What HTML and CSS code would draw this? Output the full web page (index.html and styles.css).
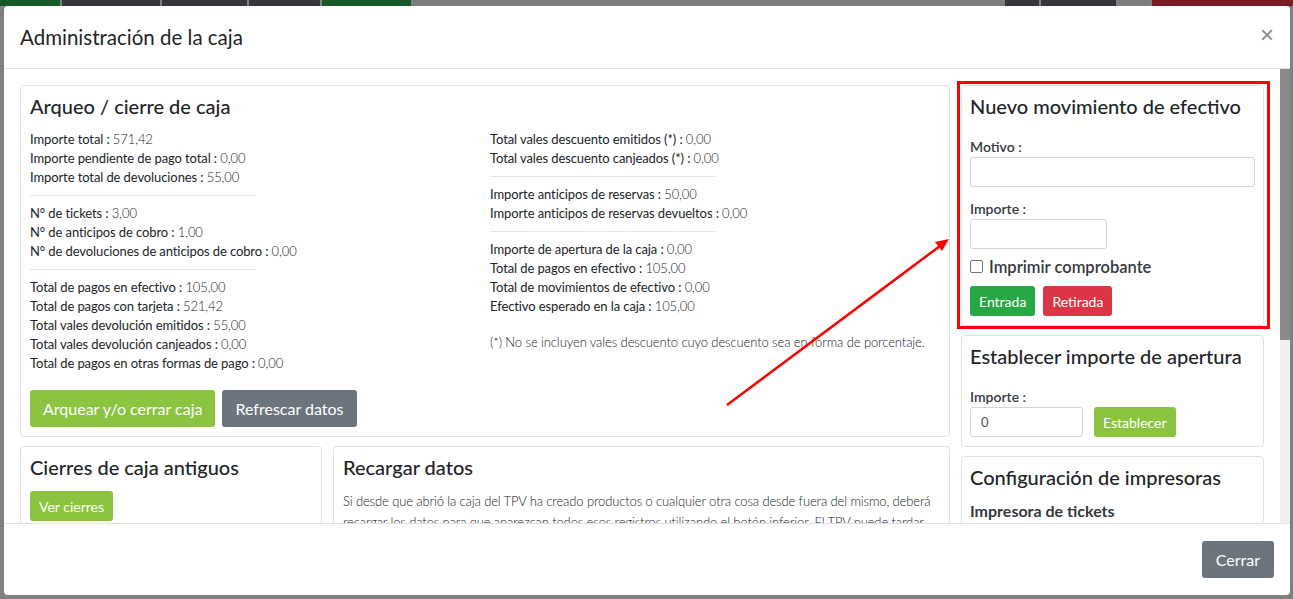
FILE: index.html
```html
<!DOCTYPE html>
<html lang="es">
<head>
<meta charset="utf-8">
<title>Administración de la caja</title>
<link rel="stylesheet" href="styles.css">
</head>
<body>
<div class="backdrop-strip">
  <span class="seg seg-green" style="width:60px"></span>
  <span class="seg seg-dark" style="width:98px"></span>
  <span class="seg seg-dark" style="width:85px"></span>
  <span class="seg seg-dark" style="width:71px"></span>
  <span class="seg seg-green" style="width:89px"></span>
  <span class="seg seg-gray" style="width:445px"></span>
  <span class="seg seg-gray" style="width:64px"></span>
  <span class="seg seg-gray" style="width:77px"></span>
  <span class="seg seg-dark" style="width:34px"></span>
  <span class="seg seg-dark" style="width:75px"></span>
  <span class="seg seg-gray" style="width:32px"></span>
  <span class="seg seg-red" style="flex:1"></span>
</div>

<div class="modal">
  <div class="modal-header">
    <h5 class="modal-title">Administración de la caja</h5>
    <button class="close" type="button">×</button>
  </div>

  <div class="modal-main">
  <div class="modal-body">
    <div class="layout">
      <div class="col-main">
        <div class="card">
          <h4 class="card-title">Arqueo / cierre de caja</h4>
          <div class="two-cols">
            <div>
              <div class="line"><span class="lbl">Importe total :</span> <span class="val">571,42</span></div>
              <div class="line"><span class="lbl">Importe pendiente de pago total :</span> <span class="val">0,00</span></div>
              <div class="line"><span class="lbl">Importe total de devoluciones :</span> <span class="val">55,00</span></div>
              <hr class="sep">
              <div class="line"><span class="lbl">N° de tickets :</span> <span class="val">3,00</span></div>
              <div class="line"><span class="lbl">N° de anticipos de cobro :</span> <span class="val">1,00</span></div>
              <div class="line"><span class="lbl">N° de devoluciones de anticipos de cobro :</span> <span class="val">0,00</span></div>
              <hr class="sep">
              <div class="line"><span class="lbl">Total de pagos en efectivo :</span> <span class="val">105,00</span></div>
              <div class="line"><span class="lbl">Total de pagos con tarjeta :</span> <span class="val">521,42</span></div>
              <div class="line"><span class="lbl">Total vales devolución emitidos :</span> <span class="val">55,00</span></div>
              <div class="line"><span class="lbl">Total vales devolución canjeados :</span> <span class="val">0,00</span></div>
              <div class="line"><span class="lbl">Total de pagos en otras formas de pago :</span> <span class="val">0,00</span></div>
            </div>
            <div>
              <div class="line"><span class="lbl">Total vales descuento emitidos (*) :</span> <span class="val">0,00</span></div>
              <div class="line"><span class="lbl">Total vales descuento canjeados (*) :</span> <span class="val">0,00</span></div>
              <hr class="sep">
              <div class="line"><span class="lbl">Importe anticipos de reservas :</span> <span class="val">50,00</span></div>
              <div class="line"><span class="lbl">Importe anticipos de reservas devueltos :</span> <span class="val">0,00</span></div>
              <hr class="sep">
              <div class="line"><span class="lbl">Importe de apertura de la caja :</span> <span class="val">0,00</span></div>
              <div class="line"><span class="lbl">Total de pagos en efectivo :</span> <span class="val">105,00</span></div>
              <div class="line"><span class="lbl">Total de movimientos de efectivo :</span> <span class="val">0,00</span></div>
              <div class="line"><span class="lbl">Efectivo esperado en la caja :</span> <span class="val">105,00</span></div>
              <p class="note">(*) No se incluyen vales descuento cuyo descuento sea en forma de porcentaje.</p>
            </div>
          </div>
          <div class="btn-row">
            <button class="btn btn-lg btn-lime" type="button">Arquear y/o cerrar caja</button>
            <button class="btn btn-lg btn-gray" type="button">Refrescar datos</button>
          </div>
        </div>

        <div class="sub-row">
          <div class="card">
            <h4 class="card-title">Cierres de caja antiguos</h4>
            <button class="btn btn-sm btn-lime" type="button">Ver cierres</button>
          </div>
          <div class="card">
            <h4 class="card-title">Recargar datos</h4>
            <p class="para">Si desde que abrió la caja del TPV ha creado productos o cualquier otra cosa desde fuera del mismo, deberá recargar los datos para que aparezcan todos esos registros utilizando el botón inferior. El TPV puede tardar unos segundos en recargar todos los datos, dependiendo de la cantidad de registros existentes.</p>
            <button class="btn btn-sm btn-lime" type="button">Recargar datos</button>
          </div>
        </div>
      </div>

      <div class="col-side">
        <div class="card">
          <h4 class="card-title">Nuevo movimiento de efectivo</h4>
          <label class="field-label first">Motivo :</label>
          <input class="input input-wide" type="text">
          <label class="field-label">Importe :</label>
          <input class="input input-short" type="text">
          <div class="check-row">
            <input class="check" type="checkbox" id="imp">
            <label class="check-label" for="imp">Imprimir comprobante</label>
          </div>
          <div class="btn-row small">
            <button class="btn btn-sm btn-green" type="button">Entrada</button>
            <button class="btn btn-sm btn-red" type="button">Retirada</button>
          </div>
        </div>

        <div class="card">
          <h4 class="card-title">Establecer importe de apertura</h4>
          <label class="field-label first">Importe :</label>
          <div class="inline-row">
            <input class="input input-open" type="text" value="0">
            <button class="btn btn-sm btn-lime" type="button">Establecer</button>
          </div>
        </div>

        <div class="card">
          <h4 class="card-title">Configuración de impresoras</h4>
          <div class="sub-title">Impresora de tickets</div>
          <select class="input input-wide select"><option>Ninguna</option></select>
          <div class="sub-title">Impresora de cocina</div>
          <select class="input input-wide select"><option>Ninguna</option></select>
          <div class="btn-row small">
            <button class="btn btn-sm btn-lime" type="button">Guardar</button>
          </div>
        </div>
      </div>
    </div>
  </div>
  <div class="scrollbar"><div class="thumb"></div></div>
  </div>

  <div class="modal-footer">
    <button class="btn btn-lg btn-gray" type="button">Cerrar</button>
  </div>
</div>

<svg class="annotation" width="1293" height="599" viewBox="0 0 1293 599" xmlns="http://www.w3.org/2000/svg">
  <rect x="958.5" y="82.5" width="310" height="245" fill="none" stroke="#ff0000" stroke-width="3"/>
  <line x1="727" y1="405" x2="940" y2="246" stroke="#ff0000" stroke-width="2.5"/>
  <polygon points="949,239 935,242 942,251" fill="#ff0000"/>
</svg>
</body>
</html>
```

FILE: styles.css
```css
* { box-sizing: border-box; }

html, body {
  margin: 0;
  padding: 0;
}

body {
  width: 1293px;
  height: 599px;
  overflow: hidden;
  background: #808080;
  font-family: "Lato", "Noto Sans", sans-serif;
  color: #212529;
}

.backdrop-strip {
  display: flex;
  gap: 2px;
  height: 6px;
}
.seg { display: block; height: 6px; }
.seg-green { background: #165a27; }
.seg-dark { background: #33373b; }
.seg-gray { background: #7d7d7d; }
.seg-red { background: #7b1a22; }

.modal {
  margin: 0 3px 0 4px;
  height: 589px;
  background: #fff;
  border-radius: 4px;
  display: flex;
  flex-direction: column;
  overflow: hidden;
}

.modal-header {
  display: flex;
  align-items: center;
  padding: 16px;
  border-bottom: 1px solid #dee2e6;
  height: 63px;
  flex: none;
}

.modal-title {
  margin: 0;
  font-size: 20.5px;
  font-weight: 400;
  line-height: 30px;
  color: #212529;
}

.close {
  margin-left: auto;
  margin-right: 0;
  margin-bottom: 4px;
  border: 0;
  background: none;
  padding: 0;
  font-family: "Liberation Sans", sans-serif;
  font-size: 24px;
  line-height: 1;
  color: #8a8a8a;
  font-weight: 400;
}

.modal-main {
  display: flex;
  height: 454px;
  flex: none;
}

.modal-body {
  flex: 1;
  overflow: hidden;
  padding: 16px;
}

.scrollbar {
  width: 10px;
  background: #f0f0f0;
  flex: none;
}
.thumb {
  height: 271px;
  background: #8a8a8a;
}

.layout {
  display: grid;
  grid-template-columns: 930px 303px;
  column-gap: 11px;
  align-items: start;
}

.col-main, .col-side {
  display: flex;
  flex-direction: column;
  gap: 9px;
}

.card {
  border: 1px solid #dfe1e4;
  border-radius: 4px;
  padding: 9px;
  background: #fff;
}
.col-side .card { padding: 9px 8px; }

.card-title {
  margin: 0 0 13px;
  font-size: 20px;
  font-weight: 500;
  line-height: 22px;
  color: #212529;
}

.two-cols {
  display: grid;
  grid-template-columns: 460px 1fr;
}

.line {
  font-size: 13px;
  line-height: 19px;
  letter-spacing: -0.1px;
  white-space: nowrap;
}

.lbl { font-weight: 400; color: #212529; }
.val { font-weight: 300; color: #212529; }

.sep {
  width: 226px;
  margin: 8px 0 8px;
  border: 0;
  border-top: 1px solid #e3e6ea;
  height: 0;
}

.note {
  margin: 17px 0 0;
  font-size: 13px;
  line-height: 19px;
  letter-spacing: -0.1px;
  font-weight: 300;
}

.btn-row {
  display: flex;
  gap: 7px;
  margin-top: 17px;
}
.btn-row.small { margin-top: 10px; gap: 8px; }

.btn {
  border: 0;
  border-radius: 3px;
  color: #fff;
  font-family: "Lato", "Noto Sans", sans-serif;
  font-weight: 400;
  cursor: pointer;
}
.btn-lg {
  height: 37px;
  padding: 0 13px;
  font-size: 16px;
}
.btn-sm {
  height: 30px;
  padding: 0 9px;
  font-size: 14px;
}
.btn-lime { background: #8bc540; }
.btn-gray { background: #6c757d; }
.btn-green { background: #28a745; }
.btn-red { background: #dc3545; }

.sub-row {
  display: grid;
  grid-template-columns: 302px 1fr;
  column-gap: 11px;
  align-items: start;
}

.para {
  margin: 0 0 10px;
  font-size: 13px;
  line-height: 21px;
  letter-spacing: -0.12px;
  font-weight: 300;
}

.field-label {
  display: block;
  font-size: 14px;
  line-height: 19px;
  font-weight: 600;
  color: #343a40;
  margin-top: 12px;
  margin-bottom: 1px;
}
.field-label.first { margin-top: 20px; }

.input {
  display: block;
  height: 30px;
  border: 1px solid #ced4da;
  border-radius: 3px;
  padding: 0 10px;
  font-family: "Lato", "Noto Sans", sans-serif;
  font-size: 13px;
  color: #495057;
  background: #fff;
}
.input-wide { width: 100%; }
.input-short { width: 137px; }
.input-open { width: 113px; }

.check-row {
  display: flex;
  align-items: center;
  gap: 6px;
  margin-top: 8px;
  height: 19px;
}
.check {
  appearance: none;
  -webkit-appearance: none;
  margin: 0;
  width: 13px;
  height: 13px;
  border: 1px solid #767676;
  border-radius: 2px;
  background: #fff;
}
.check-label {
  font-size: 16.5px;
  font-weight: 600;
  color: #343a40;
}

.inline-row {
  display: flex;
  gap: 11px;
}

.sub-title {
  font-size: 16px;
  line-height: 19px;
  font-weight: 700;
  color: #343a40;
  margin-bottom: 8px;
  margin-top: 10px;
}
.card-title + .sub-title { margin-top: 0; }

.modal-footer {
  border-top: 1px solid #dee2e6;
  flex: 1;
  display: flex;
  justify-content: flex-end;
  align-items: center;
  padding: 0 16px;
}
.modal-footer .btn-lg { height: 37px; padding: 0 14px; }

.annotation {
  position: fixed;
  left: 0;
  top: 0;
  pointer-events: none;
}
```
